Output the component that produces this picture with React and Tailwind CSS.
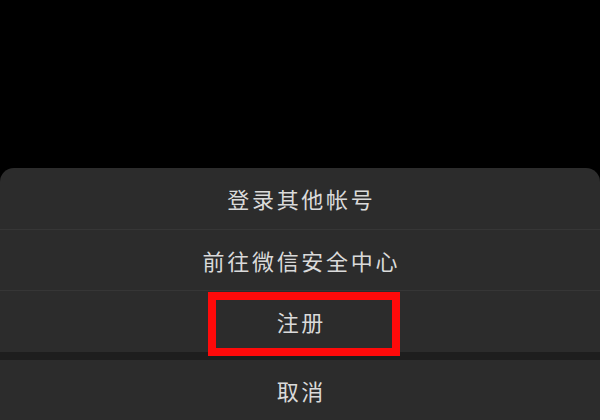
import React from "react";

const actions = ["登录其他帐号", "前往微信安全中心"];

function SheetRow({ label, className = "", children }) {
  return (
    <div
      className={`relative flex items-center justify-center text-[22px] tracking-[2.7px] text-[#dadada] ${className}`}
    >
      <span className="pl-[2.7px]">{label}</span>
      {children}
    </div>
  );
}

export default function App() {
  return (
    <div
      className="flex h-[420px] w-[600px] flex-col justify-end overflow-hidden bg-black"
      style={{ fontFamily: '"Noto Sans CJK SC", "Noto Sans", sans-serif' }}
    >
      <div className="rounded-t-[14px] bg-[#2c2c2c]">
        <SheetRow label={actions[0]} className="h-[62px] border-b border-[#363636]" />
        <SheetRow label={actions[1]} className="h-[61px] border-b border-[#363636]" />
        <SheetRow label="注册" className="h-[61px]">
          {/* annotation box */}
          <span className="absolute left-[208px] top-[1px] z-10 h-[64px] w-[192px] border-[8px] border-[#ff0a0a]" />
        </SheetRow>
        <div className="h-2 bg-[#1e1e1e]" />
        <SheetRow label="取消" className="h-[60px]" />
      </div>
    </div>
  );
}
